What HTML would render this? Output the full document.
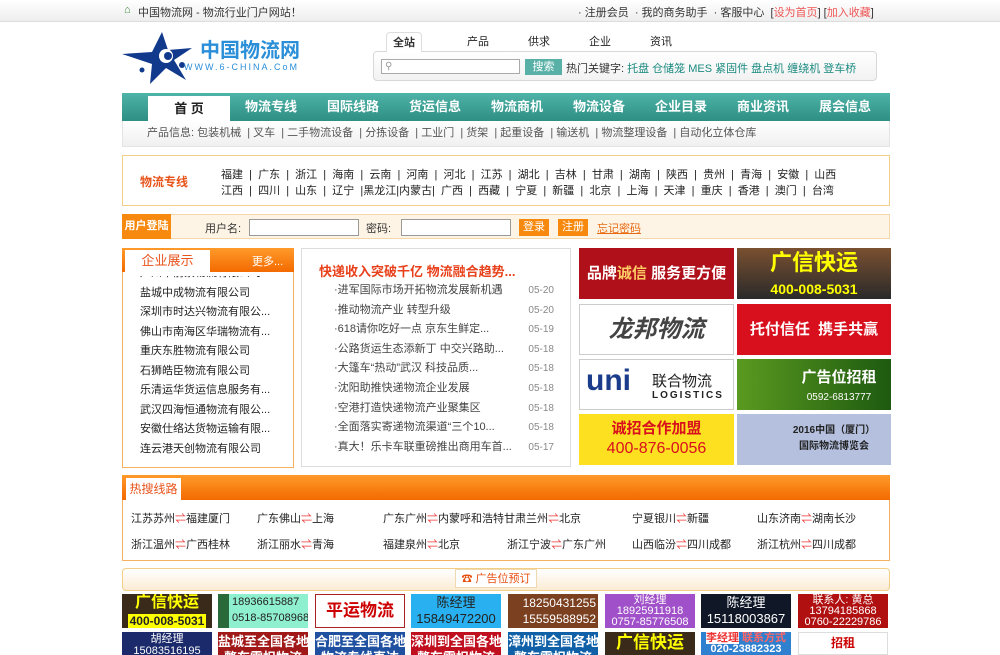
<!DOCTYPE html>
<html><head><meta charset="utf-8">
<style>
*{margin:0;padding:0;box-sizing:border-box}
body{width:1000px;height:655px;overflow:hidden;background:#fff;font-family:"Liberation Sans","Noto Sans CJK SC",sans-serif;font-size:12px;color:#333;position:relative}
.a{position:absolute}
.top{left:0;top:0;width:1000px;height:22px;background:linear-gradient(#fff,#eee);border-bottom:1px solid #ddd}
.top span{position:absolute;top:4px;font-size:11px;color:#333}
.tab{top:32px;height:20px;font-size:11px;color:#222;text-align:center;line-height:20px}
.nav{left:122px;top:93px;width:768px;height:28px;background:linear-gradient(#4eb3a8,#2e8f84)}
.nav div{position:absolute;top:0;height:28px;line-height:28px;color:#fff;font-weight:bold;font-size:13px;text-align:center;width:82px}
.sub{left:122px;top:121px;width:768px;height:26px;background:linear-gradient(#fff,#f0f0f0);border:1px solid #e4e4e4;border-top:0;font-size:11px;color:#555;line-height:24px;padding-left:24px}
.box{border:1px solid #f2cf86}
.cities{position:absolute;font-size:11px;color:#222;white-space:nowrap;letter-spacing:0}
.hd{background:linear-gradient(#ff9a2a,#f36a00)}
.comp div{height:19.5px;line-height:19.5px;font-size:11px;color:#222;white-space:nowrap}
.news div{height:19.6px;line-height:19.6px;font-size:11px;color:#444;position:relative;padding-left:12px}
.news div i{position:absolute;right:0;font-style:normal;color:#888;font-size:10px}
.ad{position:absolute;overflow:hidden;text-align:center;font-weight:bold}
.rt{position:absolute;font-size:11px;color:#222;white-space:nowrap}
.rt b{color:#e33;font-weight:normal}
.sa{position:absolute;width:90px;height:34px;overflow:hidden;text-align:center;color:#fff;font-size:12px;line-height:16px;white-space:nowrap}
.r2{top:632px;height:23px;font-size:13px;font-weight:bold;line-height:16px;padding-top:2px}
</style></head><body>
<div class="a top">
<span style="left:124px;color:#3a8a3a">⌂</span>
<span style="left:138px">中国物流网 - 物流行业门户网站！</span>
<span style="left:578px">· 注册会员 &nbsp;· 我的商务助手 &nbsp;· 客服中心 &nbsp;[<b style="color:#e55;font-weight:normal">设为首页</b>] [<b style="color:#e55;font-weight:normal">加入收藏</b>]</span>
</div>
<svg class="a" style="left:122px;top:30px" width="190" height="56" viewBox="0 0 190 56">
<path d="M40 2 L46 20 L70 18 L52 30 L64 50 L44 38 L28 54 L30 34 L0 24 L30 22 Z" fill="#123a8c"/>
<circle cx="44" cy="26" r="7" fill="#fff"/><circle cx="46" cy="26" r="4" fill="#123a8c"/>
<circle cx="60" cy="35" r="3" fill="#123a8c"/><circle cx="20" cy="40" r="2.5" fill="#123a8c"/>
<text x="78" y="27" font-size="20" font-weight="bold" fill="#2a8fd8" font-family="Noto Sans CJK SC">中国物流网</text>
<text x="62" y="40" font-size="9" fill="#2a8fd8" letter-spacing="2">WWW.6-CHINA.CoM</text>
</svg>
<div class="a" style="left:386px;top:32px;width:36px;height:20px;background:#fff;border:1px solid #ddd;border-bottom:0;border-radius:4px 4px 0 0;z-index:2;font-weight:bold;text-align:center;line-height:20px;font-size:11px">全站</div>
<div class="a tab" style="left:460px;width:36px">产品</div>
<div class="a tab" style="left:521px;width:36px">供求</div>
<div class="a tab" style="left:582px;width:36px">企业</div>
<div class="a tab" style="left:643px;width:36px">资讯</div>
<div class="a" style="left:373px;top:51px;width:504px;height:30px;background:linear-gradient(#fff,#f2f2f2);border:1px solid #d8d8d8;border-radius:4px"></div>
<div class="a" style="left:381px;top:59px;width:139px;height:15px;border:1px solid #aaa;background:#fff;font-size:10px;color:#999;padding-left:3px;line-height:13px">⚲</div>
<div class="a" style="left:525px;top:59px;width:37px;height:16px;background:#58b0a6;color:#fff;font-size:11px;text-align:center;line-height:16px">搜索</div>
<div class="a" style="left:566px;top:60px;font-size:11px;white-space:nowrap"><b style="font-weight:normal">热门关键字:</b> <span style="color:#1a8a80">托盘 仓储笼 MES 紧固件 盘点机 缠绕机 登车桥</span></div>
<div class="a nav">
<div style="left:26px;top:3px;height:25px;line-height:25px;background:#fff;color:#222;width:82px">首 页</div>
<div style="left:108px">物流专线</div><div style="left:190px">国际线路</div><div style="left:272px">货运信息</div><div style="left:354px">物流商机</div><div style="left:436px">物流设备</div><div style="left:518px">企业目录</div><div style="left:600px">商业资讯</div><div style="left:682px">展会信息</div>
</div>
<div class="a sub">产品信息: 包装机械 &nbsp;| 叉车 &nbsp;| 二手物流设备 &nbsp;| 分拣设备 &nbsp;| 工业门 &nbsp;| 货架 &nbsp;| 起重设备 &nbsp;| 输送机 &nbsp;| 物流整理设备 &nbsp;| 自动化立体仓库</div>
<div class="a box" style="left:122px;top:155px;width:768px;height:51px"></div>
<div class="a" style="left:140px;top:173px;color:#e8531a;font-size:12px;font-weight:bold">物流专线</div>
<div class="cities" style="left:221px;top:166px">福建 &nbsp;| &nbsp;广东 &nbsp;| &nbsp;浙江 &nbsp;| &nbsp;海南 &nbsp;| &nbsp;云南 &nbsp;| &nbsp;河南 &nbsp;| &nbsp;河北 &nbsp;| &nbsp;江苏 &nbsp;| &nbsp;湖北 &nbsp;| &nbsp;吉林 &nbsp;| &nbsp;甘肃 &nbsp;| &nbsp;湖南 &nbsp;| &nbsp;陕西 &nbsp;| &nbsp;贵州 &nbsp;| &nbsp;青海 &nbsp;| &nbsp;安徽 &nbsp;| &nbsp;山西</div>
<div class="cities" style="left:221px;top:182px">江西 &nbsp;| &nbsp;四川 &nbsp;| &nbsp;山东 &nbsp;| &nbsp;辽宁 &nbsp;|黑龙江|内蒙古| &nbsp;广西 &nbsp;| &nbsp;西藏 &nbsp;| &nbsp;宁夏 &nbsp;| &nbsp;新疆 &nbsp;| &nbsp;北京 &nbsp;| &nbsp;上海 &nbsp;| &nbsp;天津 &nbsp;| &nbsp;重庆 &nbsp;| &nbsp;香港 &nbsp;| &nbsp;澳门 &nbsp;| &nbsp;台湾</div>
<div class="a" style="left:122px;top:214px;width:768px;height:25px;background:#fdf4e6;border:1px solid #f2d8a8"></div>
<div class="a" style="left:122px;top:214px;width:49px;height:25px;background:#f7890f;color:#fff;font-size:11px;font-weight:bold;text-align:center;line-height:25px">用户登陆</div>
<div class="a" style="left:205px;top:220px;font-size:11px">用户名:</div>
<div class="a" style="left:249px;top:219px;width:110px;height:17px;background:#fff;border:1px solid #999"></div>
<div class="a" style="left:366px;top:220px;font-size:11px">密码:</div>
<div class="a" style="left:401px;top:219px;width:110px;height:17px;background:#fff;border:1px solid #999"></div>
<div class="a" style="left:519px;top:219px;width:30px;height:17px;background:#f7890f;color:#fff;font-size:11px;text-align:center;line-height:17px">登录</div>
<div class="a" style="left:558px;top:219px;width:30px;height:17px;background:#f7890f;color:#fff;font-size:11px;text-align:center;line-height:17px">注册</div>
<div class="a" style="left:597px;top:220px;font-size:11px;color:#e86a10;text-decoration:underline">忘记密码</div>
<div class="a box" style="left:122px;top:248px;width:172px;height:220px;border-color:#f5b060"></div>
<div class="a hd" style="left:122px;top:248px;width:172px;height:24px"></div>
<div class="a" style="left:125px;top:250px;width:85px;height:22px;background:#fff;color:#e8531a;font-size:13px;text-align:center;line-height:22px">企业展示</div>
<div class="a" style="left:252px;top:253px;color:#fff;font-size:11px">更多...</div>
<div class="a comp" style="left:140px;top:276px;width:150px;height:182px;overflow:hidden">
<div style="margin-top:-12px">广州市前景物流有限公司</div><div>盐城中成物流有限公司</div><div>深圳市时达兴物流有限公...</div><div>佛山市南海区华瑞物流有...</div><div>重庆东胜物流有限公司</div><div>石狮皓臣物流有限公司</div><div>乐清运华货运信息服务有...</div><div>武汉四海恒通物流有限公...</div><div>安徽仕络达货物运输有限...</div><div>连云港天创物流有限公司</div>
</div>
<div class="a" style="left:301px;top:248px;width:270px;height:219px;border:1px solid #ddd"></div>
<div class="a" style="left:319px;top:261px;color:#e8401a;font-size:13px;font-weight:bold">快递收入突破千亿 物流融合趋势...</div>
<div class="a news" style="left:322px;top:281px;width:232px">
<div>·进军国际市场开拓物流发展新机遇<i>05-20</i></div>
<div>·推动物流产业 转型升级<i>05-20</i></div>
<div>·618请你吃好一点 京东生鲜定...<i>05-19</i></div>
<div>·公路货运生态添新丁 中交兴路助...<i>05-18</i></div>
<div>·大篷车“热动”武汉 科技品质...<i>05-18</i></div>
<div>·沈阳助推快递物流企业发展<i>05-18</i></div>
<div>·空港打造快递物流产业聚集区<i>05-18</i></div>
<div>·全面落实寄递物流渠道“三个10...<i>05-18</i></div>
<div>·真大！乐卡车联重磅推出商用车首...<i>05-17</i></div>
</div>
<div class="ad" style="left:579px;top:248px;width:155px;height:51px;background:#b0101a;color:#fff;font-size:15px;line-height:51px">品牌<span style="color:#fc6">诚信</span> 服务更方便</div>
<div class="ad" style="left:737px;top:248px;width:154px;height:51px;background:linear-gradient(#7a5030,#2a2a2a);color:#ff0;font-size:22px;line-height:24px;padding-top:3px">广信快运<br><span style="font-size:14px">400-008-5031</span></div>
<div class="ad" style="left:579px;top:304px;width:155px;height:51px;background:#fff;border:1px solid #ccc;color:#444;font-size:24px;line-height:49px;font-style:italic">龙邦物流</div>
<div class="ad" style="left:737px;top:304px;width:154px;height:51px;background:#d8101e;color:#fff;font-size:15px;line-height:51px">托付信任 &nbsp;携手共赢</div>
<div class="ad" style="left:579px;top:359px;width:155px;height:51px;background:#fff;border:1px solid #ccc;color:#123a8c;font-size:11px;text-align:left"><span style="position:absolute;left:6px;top:4px;font-size:30px;font-weight:bold;color:#1a3c8a">uni</span><span style="position:absolute;left:72px;top:10px;color:#222;font-size:15px;font-weight:normal">联合物流</span><span style="position:absolute;left:72px;top:30px;color:#222;font-size:10px;letter-spacing:2px">LOGISTICS</span></div>
<div class="ad" style="left:737px;top:359px;width:154px;height:51px;background:linear-gradient(90deg,#5a9a20,#1e5a10);color:#fff;font-size:15px;line-height:18px;padding:10px 0 0 50px">广告位招租<br><span style="font-size:10px;font-weight:normal">0592-6813777</span></div>
<div class="ad" style="left:579px;top:414px;width:155px;height:51px;background:#fde020;color:#d8101e;font-size:15px;line-height:20px;padding-top:5px">诚招合作加盟<br><span style="font-size:16px;font-weight:normal">400-876-0056</span></div>
<div class="ad" style="left:737px;top:414px;width:154px;height:51px;background:#b4c0de;color:#222;font-size:10px;line-height:16px;padding:9px 0 0 40px">2016中国（厦门）<br>国际物流博览会</div>
<div class="a box" style="left:122px;top:475px;width:768px;height:86px;border-color:#f5b060"></div>
<div class="a hd" style="left:122px;top:475px;width:768px;height:25px"></div>
<div class="a" style="left:126px;top:478px;width:55px;height:22px;background:#fff;color:#e8531a;font-size:12px;text-align:center;line-height:22px">热搜线路</div>
<div class="rt" style="left:131px;top:510px">江苏苏州<b>⇌</b>福建厦门</div>
<div class="rt" style="left:257px;top:510px">广东佛山<b>⇌</b>上海</div>
<div class="rt" style="left:383px;top:510px">广东广州<b>⇌</b>内蒙呼和浩特甘肃兰州<b>⇌</b>北京</div>
<div class="rt" style="left:632px;top:510px">宁夏银川<b>⇌</b>新疆</div>
<div class="rt" style="left:757px;top:510px">山东济南<b>⇌</b>湖南长沙</div>
<div class="rt" style="left:131px;top:536px">浙江温州<b>⇌</b>广西桂林</div>
<div class="rt" style="left:257px;top:536px">浙江丽水<b>⇌</b>青海</div>
<div class="rt" style="left:383px;top:536px">福建泉州<b>⇌</b>北京</div>
<div class="rt" style="left:507px;top:536px">浙江宁波<b>⇌</b>广东广州</div>
<div class="rt" style="left:632px;top:536px">山西临汾<b>⇌</b>四川成都</div>
<div class="rt" style="left:757px;top:536px">浙江杭州<b>⇌</b>四川成都</div>
<div class="a" style="left:122px;top:568px;width:768px;height:23px;background:linear-gradient(#fff,#fbecd4);border:1px solid #f2cf86;border-radius:4px"></div>
<div class="a" style="left:455px;top:569px;width:82px;height:19px;background:#fff;border:1px solid #f0d8b0;color:#e85010;font-size:11px;text-align:center;line-height:18px">☎ 广告位预订</div>
<div class="sa" style="left:122px;top:594px;background:#3a2a1a;color:#ff0;font-size:16px;font-weight:bold;line-height:18px">广信快运<br><span style="font-size:12px;line-height:14px;display:inline-block;background:#ff0;color:#222;padding:0 2px">400-008-5031</span></div>
<div class="sa" style="left:218px;top:594px;background:#8ff0d0;color:#222;text-align:left;padding-left:14px;font-size:11px"><span style="position:absolute;left:0;top:0;width:11px;height:34px;background:#2a6a3a"></span>18936615887<br>0518-85708968</div>
<div class="sa" style="left:315px;top:594px;background:#fff;border:1px solid #a22;color:#c00;font-size:17px;font-weight:bold;line-height:32px">平运物流</div>
<div class="sa" style="left:411px;top:594px;background:#28b0f0;color:#222;font-size:13px;line-height:16px;padding-top:1px">陈经理<br>15849472200</div>
<div class="sa" style="left:508px;top:594px;background:#7a4020;font-size:12px;line-height:16px;padding-top:1px;text-align:right;padding-right:2px">18250431255<br>15559588952</div>
<div class="sa" style="left:605px;top:594px;background:#a050c8;line-height:11px;font-size:11px;padding-top:1px">刘经理<br>18925911918<br>0757-85776508</div>
<div class="sa" style="left:701px;top:594px;background:#101828;font-size:13px;line-height:16px;padding-top:1px">陈经理<br>15118003867</div>
<div class="sa" style="left:798px;top:594px;background:#b01010;font-size:11px;line-height:11px;padding-top:1px">联系人: 黄总<br>13794185868<br>0760-22229786</div>
<div class="sa r2" style="left:122px;background:#1a2a6a;font-size:11px;font-weight:normal;line-height:12px;padding-top:1px">胡经理<br>15083516195</div>
<div class="sa r2" style="left:218px;background:#a01818">盐城至全国各地<br>整车零担物流</div>
<div class="sa r2" style="left:315px;background:#2050a0">合肥至全国各地<br>物流专线直达</div>
<div class="sa r2" style="left:411px;background:#c01020">深圳到全国各地<br>整车零担物流</div>
<div class="sa r2" style="left:508px;background:#1060a8">漳州到全国各地<br>整车零担物流</div>
<div class="sa r2" style="left:605px;background:#3a2a1a;color:#ff0;font-size:17px;line-height:20px;padding-top:1px">广信快运</div>
<div class="sa r2" style="left:701px;background:#3080d0;font-size:11px;line-height:11px;padding-top:1px"><span style="background:#fff;color:#e33">李经理</span> <span style="color:#f66">联系方式</span><br>020-23882323</div>
<div class="sa r2" style="left:798px;background:#fff;border:1px solid #ddd;color:#c00;font-size:12px">招租</div>
</body></html>
